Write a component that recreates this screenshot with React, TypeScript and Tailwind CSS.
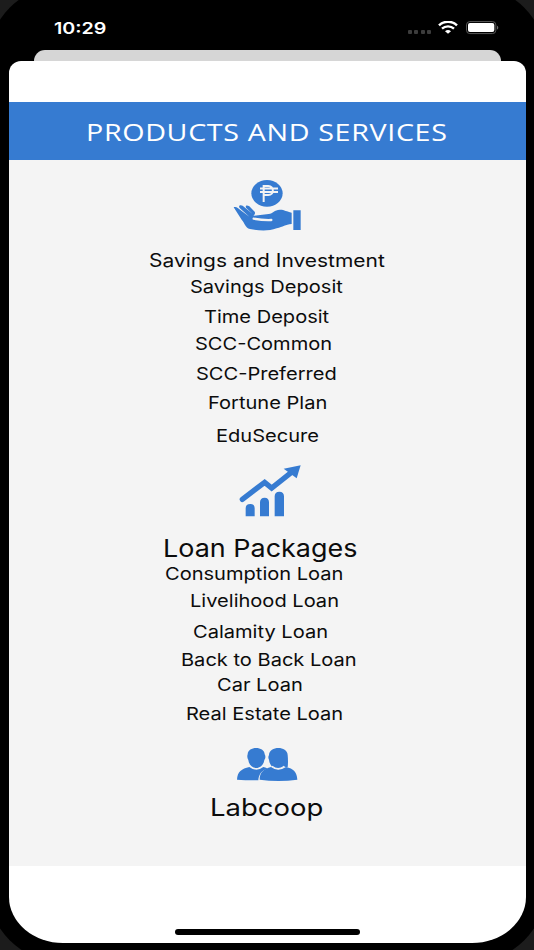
import React from "react";
import clsx from "clsx";

const savings = [
  { label: "Savings and Investment", row: "h-[27px] ml-[140px] text-[18.3px]" },
  { label: "Savings Deposit", row: "h-[30px] ml-[181px] text-[17.5px]" },
  { label: "Time Deposit", row: "h-[27px] ml-[195px] text-[17.5px]" },
  { label: "SCC-Common", row: "h-[30px] ml-[185.500px] text-[17.5px]" },
  { label: "SCC-Preferred", row: "h-[29px] ml-[187px] text-[17.5px]" },
  { label: "Fortune Plan", row: "h-[33px] ml-[198.500px] text-[17.5px]" },
  { label: "EduSecure", row: "h-[29px] ml-[207px] text-[17.5px]" },
];

const loans = [
  { label: "Consumption Loan", row: "h-[27px] ml-[156px] text-[17.5px]" },
  { label: "Livelihood Loan", row: "h-[31px] ml-[180.500px] text-[17.5px]" },
  { label: "Calamity Loan", row: "h-[28px] ml-[184px] text-[17.5px]" },
  { label: "Back to Back Loan", row: "h-[25px] ml-[171.500px] text-[17.5px]" },
  { label: "Car Loan", row: "h-[29px] ml-[208px] text-[17.5px]" },
  { label: "Real Estate Loan", row: "h-[31px] ml-[176.500px] text-[17.5px]" },
];

function Row({ label, row }: { label: string; row: string }) {
  return (
    <li className={clsx("leading-5 whitespace-nowrap", row)}>
      <span className="inline-block origin-left scale-x-[1.146]">{label}</span>
    </li>
  );
}

function StatusBar() {
  return (
    <div className="flex h-[50px] pl-[54px] pr-[35px] pt-[18px] text-white">
      <span className="inline-block h-5 origin-left scale-x-[1.23] text-[16px] leading-5 font-semibold">
        10:29
      </span>
      <div className="ml-auto flex h-5 items-start">
        <div className="mt-[12px] flex gap-[2.3px]">
          <i className="h-[4px] w-[4px] rounded-[1px] bg-[#3c3c3c]" />
          <i className="h-[4px] w-[4px] rounded-[1px] bg-[#3c3c3c]" />
          <i className="h-[4px] w-[4px] rounded-[1px] bg-[#3c3c3c]" />
          <i className="h-[4px] w-[4px] rounded-[1px] bg-[#3c3c3c]" />
        </div>
        <svg className="mt-[3px] ml-[7px] h-[13px] w-[20px]" viewBox="0 0 60 39" fill="none">
          <path d="M3 13C18-1 42-1 57 13" stroke="#fff" strokeWidth="7.5" />
          <path d="M12 23C22 13.500 38 13.500 48 23" stroke="#fff" strokeWidth="7" />
          <path d="M21 30.500C27 25.500 33 25.500 39 30.500L30 38Z" fill="#fff" />
        </svg>
        <svg className="mt-[3px] ml-[8px] h-[13.500px] w-[33px]" viewBox="0 0 99 40">
          <rect x="1.500" y="1.500" width="88" height="36" rx="10" fill="none" stroke="#6a6a6a" strokeWidth="2.500" />
          <rect x="6" y="6" width="79" height="27" rx="6" fill="#fff" />
          <path d="M93 14C98 15 98 24 93 25Z" fill="#6a6a6a" />
        </svg>
      </div>
    </div>
  );
}

function HandPesoIcon() {
  return (
    <svg className="ml-[211px] h-[70px] w-[100px]" viewBox="0 0 300 210">
      <ellipse cx="141" cy="70" rx="47" ry="40" fill="#367bd1" />
      <path
        d="M131 96V48H145C163 48 163 75 145 75H131M120 55.500H174M120 66H174"
        fill="none"
        stroke="#f3f3f3"
        strokeWidth="6"
      />
      <path
        d="M41 112C48 108 55 115 61 120L88 140L59 114C54 107 61 103 68 107L98 132L78 113C75 106 81 104 88 109L104 125C108 132 100 136 101 137L146 132C160 130 162 120 180 119C194 119 200 125 215 128V162C195 164 190 170 170 175C145 184 120 183 90 177C75 173 74 158 65 149Z"
        fill="#367bd1"
      />
      <path d="M101 146Q128 151 154 150" fill="none" stroke="#f3f3f3" strokeWidth="7" strokeLinecap="round" />
      <path d="M220 121H242V180H220Z" fill="#367bd1" />
    </svg>
  );
}

function GrowthIcon() {
  return (
    <svg className="ml-[211px] h-[70px] w-[100px]" viewBox="0 0 300 210" fill="#367bd1">
      <path d="M77 184V160Q77 147 91 147Q104 147 104 160V184ZM120 184V142Q120 128 134 128Q147 128 147 142V184ZM164 184V124Q164 110 178 110Q192 110 192 124V184Z" />
      <path d="M67 133L134 82L155 99L218 49" fill="none" stroke="#367bd1" strokeWidth="16" strokeLinecap="round" />
      <path d="M191 41L242 31L230 70Z" />
    </svg>
  );
}

function PeopleIcon() {
  return (
    <svg className="ml-[211px] h-[59px] w-[100px]" viewBox="0 0 300 177" fill="#367bd1">
      <path d="M51 134C52 110 65 101 88 96Q109 112 130 96Q140 98 142 101C124 106 116 119 115 136Q76 136 51 134Z" />
      <path d="M83 58C84 33 133 33 134 58Q139 67 133 75C131 90 120 99 109 99C97 99 87 90 85 75Q80 67 83 58Z" />
      <path d="M119 134C119 112 132 101 153 96Q174 112 198 96C220 101 231 111 232 134Q175 142 119 134Z" />
      <path d="M147 60C148 32 202 32 203 60Q205 80 203 97L193 95Q175 105 156 95Q148 86 147 74Q143 67 147 60Z" />
      <path d="M156 94Q174 108 193 94" fill="none" stroke="#f3f3f3" strokeWidth="4" />
    </svg>
  );
}

export default function App() {
  return (
    <main className="relative h-[950px] w-[534px] overflow-hidden bg-[#1c1c1c] font-['Inter',sans-serif] text-[#0c0c0c]">
      <div className="absolute -inset-x-3 -top-[14px] -bottom-3 rounded-[74px] bg-black" />
      <div className="relative">
        <StatusBar />
        <div className="mr-[33.500px] ml-[34px] h-[11px] rounded-t-[11px] bg-[#d6d6d6]" />
        <section className="mr-[8.500px] ml-[9px] flex h-[881.500px] flex-col overflow-hidden rounded-t-[12px] rounded-br-[54px_46px] rounded-bl-[54px_46px] bg-white">
          <header className="mt-[41px] h-[58px] bg-[#367bd1] pt-[14px] pl-[77px] font-['Open_Sans',sans-serif] text-white">
            <h1 className="inline-block origin-left scale-x-[1.17] text-[24.500px] leading-8 tracking-[0.55px] whitespace-nowrap">
              PRODUCTS AND SERVICES
            </h1>
          </header>

          <div className="h-[706px] bg-[#f4f4f4] pt-[10px]">
            <HandPesoIcon />
            <ul className="mt-[10px]">
              {savings.map((item) => (
                <Row key={item.label} {...item} />
              ))}
            </ul>

            <GrowthIcon />
            <h2 className="mt-[9px] ml-[154px] h-[30px] text-[24.500px] leading-7 whitespace-nowrap">
              <span className="inline-block origin-left scale-x-[1.1]">Loan Packages</span>
            </h2>
            <ul>
              {loans.map((item) => (
                <Row key={item.label} {...item} />
              ))}
            </ul>

            <PeopleIcon />
            <h2 className="ml-[201px] text-[24px] leading-7">
              <span className="inline-block origin-left scale-x-[1.145]">Labcoop</span>
            </h2>
          </div>

          <div className="mt-[63px] ml-[166px] h-[5.500px] w-[184.500px] rounded-full bg-black" />
        </section>
      </div>
    </main>
  );
}
